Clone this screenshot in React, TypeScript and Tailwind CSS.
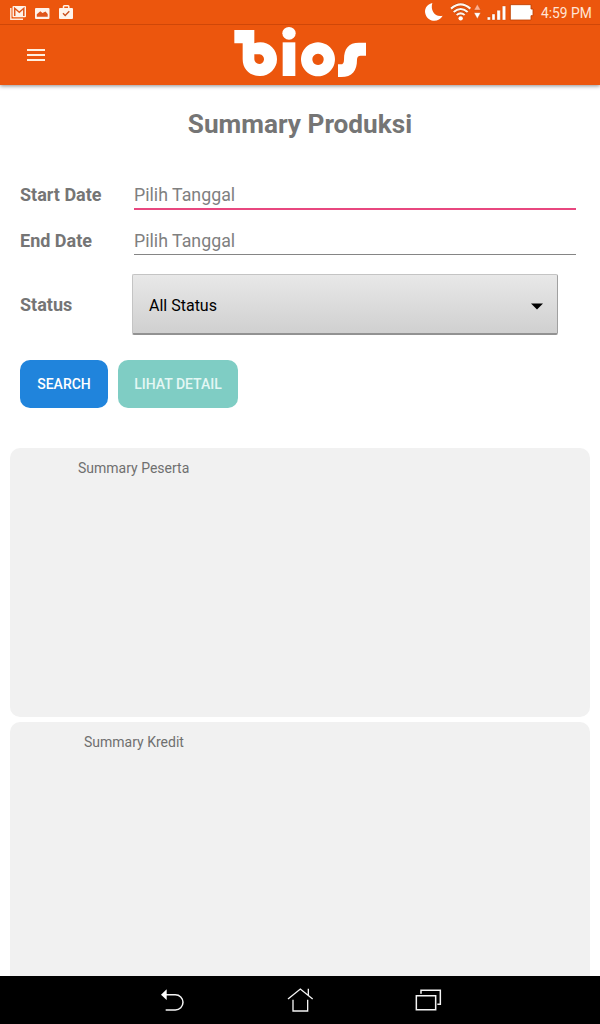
import React from "react";

function StatusBar() {
  return (
    <div className="flex h-[25px] items-center border-b border-[#cf4708] pl-[10px] pr-2">
      <svg className="h-[25px] w-[70px]" viewBox="0 0 70 25" fill="none">
        <path d="M0.8 8V19.2H13" stroke="#ffe9dc" strokeWidth="1.4" />
        <rect x="2.5" y="6" width="13.5" height="11.3" rx="1" fill="#fff3ea" />
        <path d="M4.7 16V8.3L9.3 12.2L13.8 8.3V16" stroke="#e0561a" strokeWidth="1.5" />
        <rect x="25" y="8" width="14.5" height="11" rx="1" fill="#fff3ea" />
        <path d="M26.8 16.8V14.3L30.3 11.3L32.5 13L35.5 11.5L37.7 14V16.8Z" fill="#e0561a" />
        <path d="M53.5 8V6.6Q53.5 5.7 54.4 5.7H58Q58.8 5.7 58.8 6.6V8" stroke="#fff3ea" strokeWidth="1.5" />
        <rect x="49" y="8" width="14" height="11" rx="1" fill="#fff3ea" />
        <path d="M53 13.2L55.2 15.4L59.3 11.2" stroke="#c9501d" strokeWidth="1.4" />
      </svg>
      <svg className="ml-auto h-[25px] w-[113px]" viewBox="0 0 339 75" fill="none">
        <path d="M28 9C10 14 2 29 8 44C17 67 47 69 59 47C37 53 21 32 28 9Z" fill="#fff" />
        <g stroke="#bd3c00" strokeWidth="9">
          <path d="M84 26Q113 0 142 26M92 36Q113 18 134 36M101 45Q113 35 125 45" />
        </g>
        <g stroke="#fff7ee" strokeWidth="6.500">
          <path d="M84 26Q113 0 142 26M92 36Q113 18 134 36M101 45Q113 35 125 45" />
        </g>
        <circle cx="113" cy="55" r="6.500" fill="#fff" />
        <path d="M153 30L163 13L173 30Z" fill="#ffb090" stroke="#c64508" strokeWidth="1" />
        <path d="M153 38H173L163 56Z" fill="#fff" stroke="#c64508" strokeWidth="1" />
        <path d="M193 51H202V60H193ZM207 42H216V60H207ZM222 31H232V60H222ZM238 18H248V60H238Z" fill="#fff" stroke="#c64508" strokeWidth="1" />
        <path d="M262 14H324V27H330V47H324V60H262Z" fill="#fff" stroke="#bd4000" strokeWidth="2.500" />
      </svg>
      <span className="ml-[5px] w-[51px] whitespace-nowrap pt-[2px] text-[13.800px] leading-6 text-[#ffe5d6]">4:59 PM</span>
    </div>
  );
}

function Logo() {
  return (
    <svg className="h-[55px] w-[150px]" viewBox="0 15 450 165" role="img" aria-label="bios" fill="#fff">
      <path fillRule="evenodd" d="M28 30H88V70Q96 67 106 67A50 50.500 0 0 1 106 168C75 169 53 148 53 118V70H28ZM88 103H104A14.500 14.500 0 1 1 88 118Z" />
      <ellipse cx="192" cy="40" rx="20" ry="19" />
      <path d="M173 67H211V168H173Z" />
      <path fillRule="evenodd" d="M279 67A51 51 0 1 1 278.900 67ZM279 101A17 17 0 1 0 279.100 101Z" />
      <path d="M423 68V107H407Q396 107 396 119C396 152 382 171 348 171H339V133H347Q357 133 357 119C357 86 370 68 402 68Z" />
    </svg>
  );
}

function DateField({ label, active }: { label: string; active?: boolean }) {
  return (
    <div className="flex h-[46px] items-start">
      <label className="w-[114px] pt-[5px] text-[18px] font-bold leading-6 text-[#757575]">{label}</label>
      <div className={active ? "h-[32px] w-[442px] border-b-2 border-[#e8477f] pt-[5px]" : "h-[31px] w-[442px] border-b border-[#858585] pt-[5px]"}>
        <input
          className="block h-6 w-full bg-transparent text-[17.800px] text-[#777] outline-none placeholder:text-[#808080] placeholder:opacity-100"
          placeholder="Pilih Tanggal"
        />
      </div>
    </div>
  );
}

export default function App() {
  return (
    <div className="flex h-[1024px] w-[600px] flex-col overflow-hidden bg-white font-['Roboto',sans-serif]">
      <header className="z-10 h-[85px] shrink-0 bg-[#ec560d] shadow-[0_1px_4px_rgba(0,0,0,0.45)]">
        <StatusBar />
        <div className="flex h-[60px] items-start">
          <button className="ml-[27px] mt-[24px] flex h-[12px] w-[18px] flex-col justify-between" aria-label="Menu">
            <span className="h-[2px] w-full bg-[#fff0df]" />
            <span className="h-[2px] w-full bg-[#fff0df]" />
            <span className="h-[2px] w-full bg-[#fff0df]" />
          </button>
          <div className="ml-[180px]">
            <Logo />
          </div>
        </div>
      </header>

      <main className="flex min-h-0 flex-1 flex-col overflow-hidden">
        <h1 className="mt-[21px] text-center text-[26.200px] font-bold leading-9 text-[#757575]">Summary Produksi</h1>
        <form className="mt-[36px] px-5">
          <DateField label="Start Date" active />
          <DateField label="End Date" />
          <div className="mt-[3px] flex h-[62px] items-center">
            <span className="w-[112px] text-[18px] font-bold text-[#757575]">Status</span>
            <button type="button" className="flex h-[61px] w-[426px] items-center justify-between rounded-[2px] border border-b-2 border-[#c4c4c4] border-b-[#929292] border-r-[#a0a0a0] bg-linear-to-b from-[#e8e8e8] to-[#d0d0d0] pl-4 pr-[14px] text-[16px] text-black">
              <span className="pt-[5px]">All Status</span>
              <svg className="mt-[6px] h-[7px] w-[12px]" viewBox="0 0 12 7">
                <path d="M0 0.500H12L6 6.500Z" />
              </svg>
            </button>
          </div>
          <div className="mt-[25px] flex gap-[10px] text-[14px] font-medium">
            <button type="button" className="h-12 w-[88px] rounded-[10px] bg-[#2084dc] text-white">SEARCH</button>
            <button type="button" className="h-12 w-[120px] rounded-[10px] bg-[#7fcdc4] text-[#e4f7f4]">LIHAT DETAIL</button>
          </div>
        </form>
        <section className="mx-[10px] mt-[40px] h-[269px] shrink-0 rounded-[10px] bg-[#f1f1f1] pl-[68px] pt-[10px]">
          <h2 className="text-[14px] leading-5 text-[#6f6f6f]">Summary Peserta</h2>
        </section>
        <section className="mx-[10px] mt-[5px] h-[269px] shrink-0 rounded-[10px] bg-[#f1f1f1] pl-[74px] pt-[10px]">
          <h2 className="text-[14px] leading-5 text-[#6f6f6f]">Summary Kredit</h2>
        </section>
      </main>

      <nav className="flex h-12 shrink-0 justify-center gap-[98px] bg-black">
        <button aria-label="Back">
          <svg className="h-12 w-[30px]" viewBox="51 18 90 144" fill="none" stroke="#f4f4f4" strokeWidth="4.500">
            <path d="M78 74H106A23 23 0 0 1 106 120H77" />
            <path d="M63 74L80 58V90Z" fill="#fff" stroke="none" />
          </svg>
        </button>
        <button aria-label="Home">
          <svg className="h-12 w-[30px]" viewBox="435 18 90 144" fill="none" stroke="#f4f4f4" strokeWidth="4">
            <path d="M444 87L481 57L518 87M459 89V123H503V89M505 56V76" />
          </svg>
        </button>
        <button aria-label="Recent apps">
          <svg className="h-12 w-[30px]" viewBox="819 18 90 144" fill="none" stroke="#f4f4f4" strokeWidth="4.500">
            <path d="M829 77H887V119H829ZM843 71V61H901V103H892" />
          </svg>
        </button>
      </nav>
    </div>
  );
}
